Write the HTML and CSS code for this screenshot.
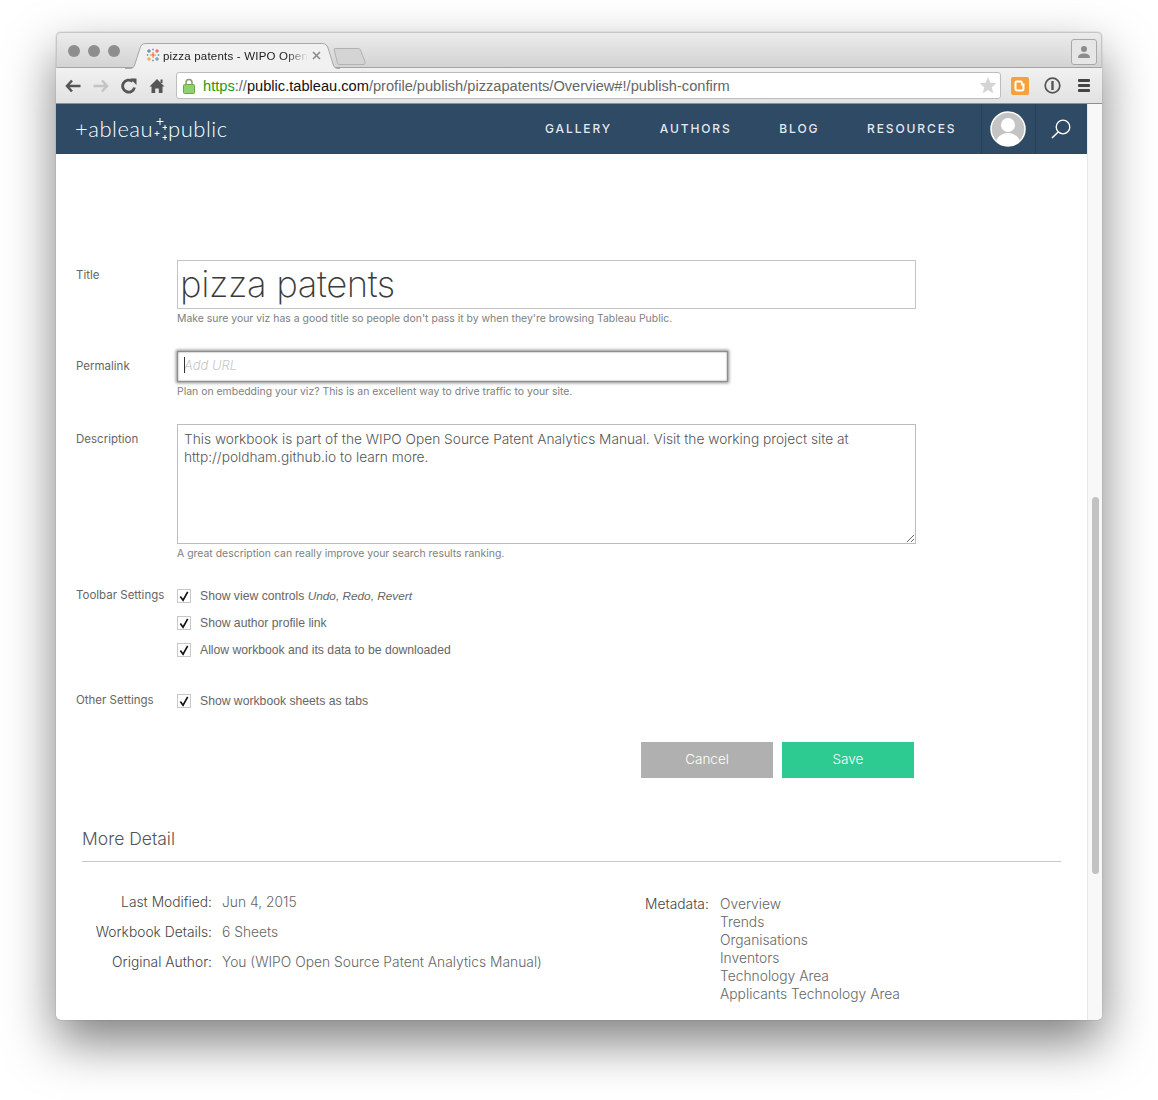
FILE: index.html

```html
<!DOCTYPE html>
<html lang="en">
<head>
    <meta charset="UTF-8">
    <title>pizza patents - WIPO Open Source Patent Analytics Manual</title>
    <link rel="stylesheet" href="styles.css">
</head>
<body>
<div class="window">
    <div class="tabstrip">
        <div class="lights"><i></i><i></i><i></i></div>
        <div class="tab">
            <svg class="tab-shape" width="215" height="26" viewBox="0 0 215 26">
                <path d="M0 25.5H5C8 25.5 9 24 10 21L15 5C16 2 17.5 .5 21 .5H197C200.500 .5 202 2 203 5L208 21C209 24 210 25.5 213 25.5H215" fill="#f1f1f1" stroke="#a8a8a8"/>
            </svg>
            <svg class="favicon" width="14" height="14" viewBox="0 0 14 14">
                <path d="M7 4.2V9.8M4.2 7H9.8" stroke="#e8762d" stroke-width="1.2"/>
                <path d="M3 1V5M1 3H5" stroke="#5b6f95" stroke-width="1"/>
                <path d="M11 1V5M9 3H13" stroke="#e15759" stroke-width="1"/>
                <path d="M3 9V13M1 11H5" stroke="#eb9e3b" stroke-width="1"/>
                <path d="M11 9V13M9 11H13" stroke="#4e8fb5" stroke-width="1"/>
                <path d="M7 .5V2.5M6 1.5H8M7 11.500V13.500M6 12.500H8M.5 7H2.500M1.500 6V8M11.500 7H13.500M12.500 6V8" stroke="#7f94b3" stroke-width=".8"/>
            </svg>
            <span class="tab-title">pizza patents - WIPO Open</span>
            <svg class="tab-close" width="9" height="9" viewBox="0 0 9 9"><path d="M1 1L8 8M8 1L1 8" stroke="#8a8a8a" stroke-width="1.600"/></svg>
        </div>
        <svg class="newtab" width="33" height="18" viewBox="0 0 33 18">
            <path d="M1 1.500C1 1 1.500 .5 2 .5H25C26.500 .5 27 1 27.500 2L32 14C32.500 16 31.500 16.500 30 16.500H7C5.500 16.500 5 16 4.500 15Z" fill="#d4d4d4" stroke="#b2b2b2"/>
        </svg>
        <div class="profile-btn">
            <svg width="14" height="14" viewBox="0 0 14 14"><circle cx="7" cy="4" r="3" fill="#8c8c8c"/><path d="M1 13C1 9.500 4 8.500 7 8.500S13 9.500 13 13Z" fill="#8c8c8c"/></svg>
        </div>
    </div>

    <div class="toolbar">
        <svg class="tool" width="16" height="14" viewBox="0 0 16 14"><path d="M7 1.500L2 7L7 12.500M2 7H15.500" fill="none" stroke="#555" stroke-width="2.500"/></svg>
        <svg class="tool" width="16" height="14" viewBox="0 0 16 14"><path d="M9 1.500L14 7L9 12.500M14 7H.5" fill="none" stroke="#c4c4c4" stroke-width="2.500"/></svg>
        <svg class="tool" width="16" height="16" viewBox="0 0 16 16"><path d="M13.500 9.500A6 6 0 1 1 11.500 3.500" fill="none" stroke="#555" stroke-width="2.800"/><path d="M9 .5H15.500V7Z" fill="#555"/></svg>
        <svg class="tool" width="16" height="16" viewBox="0 0 16 16"><path d="M8 1L15.500 8.500H13.500V15H9.800V10.500H6.200V15H2.500V8.500H.5Z" fill="#555"/><path d="M11.500 1.500H13.500V5H11.500Z" fill="#555"/></svg>
        <div class="omnibox">
            <svg class="lock" width="12" height="16" viewBox="0 0 12 16"><path d="M3 7V4.500A3 3 0 0 1 9 4.500V7" fill="none" stroke="#8a9a70" stroke-width="1.500"/><rect x=".5" y="6.500" width="11" height="9" rx="1" fill="#8fd16a" stroke="#6fa84c"/></svg>
            <span class="url"><span class="scheme">https</span><span class="dim">://</span><span class="host">public.tableau.com</span><span class="dim">/profile/publish/pizzapatents/Overview#!/publish-confirm</span></span>
            <svg class="star" width="18" height="17" viewBox="0 0 18 17"><path d="M9 0L11.300 5.800L17.500 6.300L12.700 10.300L14.300 16.500L9 13.100L3.700 16.500L5.300 10.300L.5 6.300L6.700 5.800Z" fill="#d4d4d4"/></svg>
        </div>
        <svg class="ext" width="18" height="18" viewBox="0 0 18 18"><rect width="18" height="18" rx="2" fill="#f6a13a"/><path d="M5.500 4.500H9.500Q11 4.500 11 6.500V7.500H12.500V11.500Q12.500 13.500 11 13.500H6.500Q4.500 13.500 4.500 11.500V5.500Q4.500 4.500 5.500 4.500Z" fill="none" stroke="#fff" stroke-width="2"/></svg>
        <svg class="onepass" width="17" height="17" viewBox="0 0 17 17"><circle cx="8.500" cy="8.500" r="7.300" fill="none" stroke="#555" stroke-width="1.700"/><path d="M8.500 4V13" stroke="#555" stroke-width="2.400"/></svg>
        <div class="menu-btn"><i></i><i></i><i></i></div>
    </div>

    <div class="viewport">
        <div class="page">
            <header class="site-header">
                <a class="logo">+ableau<svg class="logo-spark" width="14" height="24" viewBox="0 0 14 24"><path d="M7 0V7M3.500 3.500H10.500M12 7V12M9.500 9.500H14M4 13V18M1.500 15.500H6.500M12 17V22M9.500 19.500H14" stroke="#fff" stroke-width="1"/></svg>public</a>
                <nav class="site-nav">
                    <a>GALLERY</a>
                    <a>AUTHORS</a>
                    <a>BLOG</a>
                    <a>RESOURCES</a>
                </nav>
                <div class="header-cell avatar-cell">
                    <svg width="36" height="36" viewBox="0 0 36 36">
                        <clipPath id="avatarClip"><circle cx="18" cy="18" r="17"/></clipPath>
                        <circle cx="18" cy="18" r="17" fill="#c4c4c4"/>
                        <g clip-path="url(#avatarClip)" fill="#fff">
                            <circle cx="18" cy="14" r="7"/>
                            <ellipse cx="18" cy="32" rx="12" ry="10"/>
                        </g>
                        <circle cx="18" cy="18" r="17" fill="none" stroke="#fff" stroke-width="1.500"/>
                    </svg>
                </div>
                <div class="header-cell search-cell">
                    <svg width="20" height="20" viewBox="0 0 20 20"><circle cx="12" cy="8" r="6.800" fill="none" stroke="#fff" stroke-width="1.300"/><path d="M7.200 13L1 19" stroke="#fff" stroke-width="1.600"/></svg>
                </div>
            </header>

            <form class="publish-form">
                <div class="form-row row-title">
                    <label class="form-label">Title</label>
                    <div>
                        <input class="title-input" type="text" value="pizza patents">
                        <p class="hint">Make sure your viz has a good title so people don't pass it by when they're browsing Tableau Public.</p>
                    </div>
                </div>
                <div class="form-row row-permalink">
                    <label class="form-label">Permalink</label>
                    <div>
                        <div class="permalink-wrap">
                            <input class="permalink-input" type="text" placeholder="Add URL">
                            <span class="caret"></span>
                        </div>
                        <p class="hint">Plan on embedding your viz? This is an excellent way to drive traffic to your site.</p>
                    </div>
                </div>
                <div class="form-row row-description">
                    <label class="form-label">Description</label>
                    <div>
                        <textarea class="desc-input">This workbook is part of the WIPO Open Source Patent Analytics Manual. Visit the working project site at http://poldham.github.io to learn more.</textarea>
                        <p class="hint">A great description can really improve your search results ranking.</p>
                    </div>
                </div>
                <div class="form-row row-toolbar">
                    <label class="form-label settings-label">Toolbar Settings</label>
                    <div class="checks">
                        <div class="check"><span class="box"><svg width="13" height="13" viewBox="0 0 13 13"><path d="M2.500 6.500L5.500 10.500L10.500 1.500" fill="none" stroke="#111" stroke-width="1.800"/></svg></span>Show view controls&nbsp;<em>Undo, Redo, Revert</em></div>
                        <div class="check"><span class="box"><svg width="13" height="13" viewBox="0 0 13 13"><path d="M2.500 6.500L5.500 10.500L10.500 1.500" fill="none" stroke="#111" stroke-width="1.800"/></svg></span>Show author profile link</div>
                        <div class="check"><span class="box"><svg width="13" height="13" viewBox="0 0 13 13"><path d="M2.500 6.500L5.500 10.500L10.500 1.500" fill="none" stroke="#111" stroke-width="1.800"/></svg></span>Allow workbook and its data to be downloaded</div>
                    </div>
                </div>
                <div class="form-row row-other">
                    <label class="form-label settings-label">Other Settings</label>
                    <div class="checks">
                        <div class="check"><span class="box"><svg width="13" height="13" viewBox="0 0 13 13"><path d="M2.500 6.500L5.500 10.500L10.500 1.500" fill="none" stroke="#111" stroke-width="1.800"/></svg></span>Show workbook sheets as tabs</div>
                    </div>
                </div>
                <div class="form-actions">
                    <button type="button" class="btn btn-cancel">Cancel</button>
                    <button type="button" class="btn btn-save">Save</button>
                </div>
            </form>

            <section class="more-detail">
                <h2>More Detail</h2>
                <div class="detail-cols">
                    <dl class="detail-left">
                        <dt>Last Modified:</dt><dd>Jun 4, 2015</dd>
                        <dt>Workbook Details:</dt><dd>6 Sheets</dd>
                        <dt>Original Author:</dt><dd>You (WIPO Open Source Patent Analytics Manual)</dd>
                    </dl>
                    <div class="detail-right">
                        <span class="meta-label">Metadata:</span>
                        <ul>
                            <li>Overview</li>
                            <li>Trends</li>
                            <li>Organisations</li>
                            <li>Inventors</li>
                            <li>Technology Area</li>
                            <li>Applicants Technology Area</li>
                        </ul>
                    </div>
                </div>
            </section>
        </div>
        <div class="scrollbar"><div class="thumb"></div></div>
    </div>
</div>
</body>
</html>
```

FILE: styles.css

```css
* { box-sizing: border-box; }
html, body { margin: 0; padding: 0; background: #fff; }
body { height: 1100px; overflow: hidden; padding: 32px 56px 0; font-family: Inter, "Open Sans", Arial, sans-serif; }
p, h2, dl, dd, ul { margin: 0; padding: 0; }

.window { width: 1046px; height: 988px; border-radius: 5px; background: #fff; box-shadow: 0 22px 50px rgba(0,0,0,.5), 0 0 1px rgba(0,0,0,.5); }

/* browser chrome */
.tabstrip { position: relative; height: 36px; display: flex; border: 1px solid #c6c6c6; border-bottom: 1px solid #a4a4a4; border-radius: 5px 5px 0 0; background: linear-gradient(#ececec, #d3d3d3); }
.lights { display: flex; gap: 8px; padding: 12px 0 0 11px; }
.lights i { width: 12px; height: 12px; border-radius: 50%; background: #8e8e8e; }
.tab { position: absolute; left: 68px; top: 10px; width: 215px; height: 26px; }
.tab-shape { position: absolute; left: 0; top: 0; }
.favicon { position: absolute; left: 21px; top: 5px; }
.tab-title { position: absolute; left: 38px; top: 6px; white-space: nowrap; font: 11.500px/14px "Liberation Sans", Arial, sans-serif; letter-spacing: .2px; color: #222; -webkit-mask-image: linear-gradient(90deg, #000 85%, transparent 100%); mask-image: linear-gradient(90deg, #000 85%, transparent 100%); }
.tab-close { position: absolute; left: 187px; top: 8px; }
.newtab { position: absolute; left: 276px; top: 15px; }
.profile-btn { position: absolute; right: 4px; top: 6px; width: 26px; height: 26px; display: flex; align-items: center; justify-content: center; border: 1px solid #a9a9a9; border-radius: 3px; background: #e6e6e6; }

.toolbar { height: 36px; display: flex; align-items: center; padding: 0 10px 0 9px; background: linear-gradient(#f1f1f1, #e2e2e2); border-bottom: 1px solid #8f8f8f; }
.tool { flex: none; margin-right: 12px; }
.omnibox { width: 825px; height: 27px; margin-left: -1px; display: flex; align-items: center; padding: 0 3px 0 6px; background: #fff; border: 1px solid #bdbdbd; border-radius: 3px; }
.lock { flex: none; margin-right: 8px; }
.url { flex: 1; font: 14.640px/18px "Liberation Sans", Arial, sans-serif; white-space: nowrap; }
.scheme { color: #1d9a12; }
.dim { color: #666; }
.host { color: #111; }
.star { flex: none; }
.ext { flex: none; margin-left: 10px; }
.onepass { flex: none; margin-left: 15px; }
.menu-btn { display: flex; flex-direction: column; gap: 2px; margin-left: 17px; }
.menu-btn i { width: 12px; height: 3px; background: #444; border-radius: 1px; }

.viewport { display: flex; height: 916px; }
.page { width: 1031px; flex: none; overflow: hidden; }
.scrollbar { width: 15px; padding: 393px 3px 0 4px; background: #f8f8f8; border-left: 1px solid #e8e8e8; border-radius: 0 0 5px 0; }
.thumb { height: 377px; border-radius: 4px; background: #c2c2c2; }

/* site header */
.site-header { height: 50px; display: flex; align-items: center; background: #2e4a65; color: #fff; }
.logo { width: 318px; padding-left: 19px; font: 300 22px/50px Lato, sans-serif; letter-spacing: .5px; white-space: nowrap; }
.logo-spark { margin: 0 1px 4px 0; vertical-align: middle; }
.site-nav { flex: 1; display: flex; gap: 47.600px; padding-left: 171px; font: 500 12px/16px Inter, "Open Sans", sans-serif; letter-spacing: 1.900px; white-space: nowrap; color: #e4e9ee; }
.header-cell { height: 50px; display: flex; align-items: center; justify-content: center; border-left: 1px solid #273f57; }
.avatar-cell { width: 54px; padding-right: 2px; }
.search-cell { width: 52px; padding-right: 2px; }

/* form */
.publish-form { padding: 106px 0 0 20px; }
.form-row { display: grid; grid-template-columns: 101px 739px; font-size: 12px; }
.form-label { color: #666; font-size: 11.500px; line-height: 16px; }
.hint { margin-top: 3px; color: #808080; font-size: 10.450px; line-height: 14px; }
.row-title .form-label { padding-top: 7px; }
.title-input { display: block; width: 739px; height: 49px; padding: 0 2px 2px; border: 1px solid #c4c4c4; background: #fff; outline: 0; font: 200 36.500px/45px Inter, sans-serif; letter-spacing: -.4px; color: #3a3a3a; }
.row-permalink { margin-top: 25px; }
.row-permalink .form-label { padding-top: 7px; }
.permalink-wrap { position: relative; width: 551px; height: 31px; }
.permalink-input { display: block; width: 100%; height: 100%; padding: 0 6px 3px; border: 1px solid #8e8e8e; outline: 0; box-shadow: 0 0 3px 1px #888, inset 0 0 2px #888; background: #fff; font: italic 300 13px Inter, sans-serif; }
.permalink-input::placeholder { color: #c8c8c8; }
.caret { position: absolute; left: 7px; top: 6px; width: 1px; height: 16px; background: #333; }
.row-description { margin-top: 25px; }
.row-description .form-label { padding-top: 7px; }
.desc-input { display: block; width: 739px; height: 120px; padding: 5px 6px; border: 1px solid #bcbcbc; outline: 0; background: #fff; font: 300 13.730px/18px Inter, sans-serif; color: #555; }
.row-toolbar { margin-top: 25px; }
.settings-label { padding-top: 1px; }
.checks { display: flex; flex-direction: column; gap: 9px; padding-top: 1px; }
.check { display: flex; align-items: center; height: 18px; color: #666; font: 12.200px/18px "Liberation Sans", Arial, sans-serif; white-space: nowrap; }
.check em { font-style: italic; font-size: 11.800px; }
.box { width: 14px; height: 14px; margin-right: 9px; display: flex; border: 1px solid #c8c8c8; background: #fff; }
.row-other { margin-top: 32px; }
.form-actions { display: flex; gap: 9px; margin: 32px 0 0 565px; }
.btn { width: 132px; height: 36px; padding: 0 0 3px; border: 0; color: #fff; font: 300 13.500px Inter, sans-serif; }
.btn-cancel { background: #b0b0b0; }
.btn-save { background: #2dcb92; }

/* more detail */
.more-detail { margin: 45px 26px 0; }
.more-detail h2 { height: 39px; border-bottom: 1px solid #c8c8c8; font: 300 17.500px/32px Inter, sans-serif; color: #555; }
.detail-cols { display: flex; padding-top: 28px; font-size: 13.820px; line-height: 18px; }
.detail-left { width: 563px; padding-top: 3px; display: grid; grid-template-columns: 130px 1fr; grid-auto-rows: 30px; column-gap: 10px; }
.detail-left dt { text-align: right; color: #444; font-weight: 300; }
.detail-left dd { color: #666; font-weight: 300; }
.detail-right { display: flex; padding-top: 5px; }
.meta-label { width: 75px; color: #444; font-weight: 300; }
.detail-right ul { list-style: none; color: #666; font-weight: 300; }
```
